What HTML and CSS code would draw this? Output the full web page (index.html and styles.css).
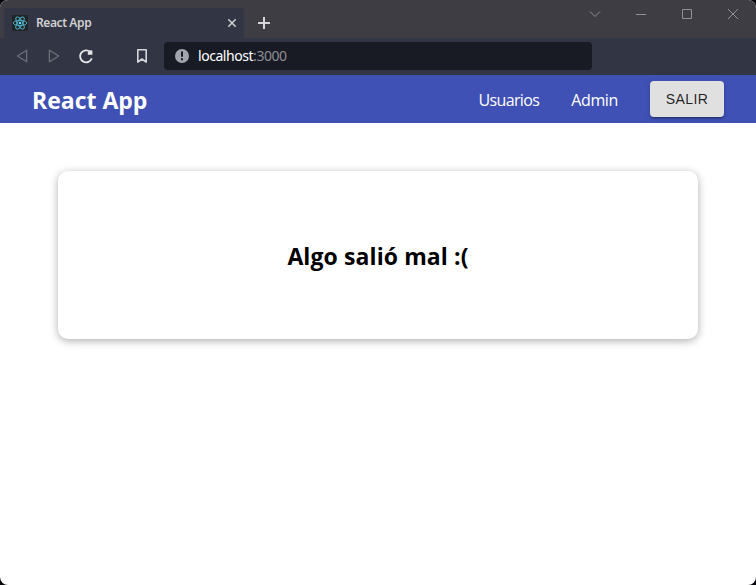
FILE: index.html
```html
<!DOCTYPE html>
<html lang="es">
<head>
<meta charset="utf-8">
<title>React App</title>
<link rel="stylesheet" href="styles.css">
</head>
<body>
<div class="window">
  <div class="titlebar">
    <div class="tab">
      <svg class="favicon" width="16" height="16" viewBox="0 0 16 16" fill="none" stroke="#4fb3cb" stroke-width=".9">
        <rect width="16" height="16" rx="1.5" fill="#222526" stroke="none"/>
        <ellipse cx="8" cy="8" rx="6.8" ry="2.6"/>
        <ellipse cx="8" cy="8" rx="6.8" ry="2.6" transform="rotate(60 8 8)"/>
        <ellipse cx="8" cy="8" rx="6.8" ry="2.6" transform="rotate(120 8 8)"/>
        <circle cx="8" cy="8" r="1.3" fill="#61dafb" stroke="none"/>
      </svg>
      <span class="tab-title">React App</span>
      <svg width="8" height="8" viewBox="0 0 8 8" stroke="#d0d0d3" stroke-width="1.5"><path d="M.3.3l7.4 7.4M7.7.3L.3 7.7"/></svg>
    </div>
    <svg class="new-tab" width="12" height="12" viewBox="0 0 12 12" stroke="#d6d6d8" stroke-width="2"><path d="M6 0v12M0 6h12"/></svg>
    <div class="controls">
      <svg width="12" height="12" viewBox="0 0 12 12"><path d="M1 3.5l5 5 5-5"/></svg>
      <svg width="12" height="12" viewBox="0 0 12 12"><path d="M1 6.5h10"/></svg>
      <svg width="12" height="12" viewBox="0 0 12 12"><path d="M1.5 1.5h9v9h-9z"/></svg>
      <svg width="12" height="12" viewBox="0 0 12 12"><path d="M1 1l10 10M11 1L1 11"/></svg>
    </div>
  </div>
  <div class="toolbar">
    <svg class="icon dim" width="16" height="16" viewBox="0 0 16 16"><path d="M12.6 2.2v11.6L3.4 8z"/></svg>
    <svg class="icon dim" width="16" height="16" viewBox="0 0 16 16"><path d="M3.4 2.2v11.6L12.8 8z"/></svg>
    <svg class="icon reload" width="16" height="16" viewBox="0 0 16 16"><path d="M13.8 10.2A6 6 0 1 1 12.2 3.9"/><path class="solid" d="M14.4 2.4v4.4H9.8V4.6l2.4-2.4z"/></svg>
    <svg class="icon bookmark" width="16" height="16" viewBox="0 0 16 16"><path d="M3.8 1.8h8.4v12.3L8 11l-4.2 3.1z"/></svg>
    <div class="address">
      <svg width="14" height="14" viewBox="0 0 14 14"><circle cx="7" cy="7" r="7" fill="#a1a4ad"/><path d="M7 2.5v5.2M7 9.3v2" stroke="#181b24" stroke-width="2"/></svg>
      <span class="url">localhost<span class="port">:3000</span></span>
    </div>
  </div>
  <header class="navbar">
    <h1 class="brand">React App</h1>
    <nav class="links">
      <a class="link users">Usuarios</a>
      <a class="link admin">Admin</a>
      <button class="logout">SALIR</button>
    </nav>
  </header>
  <main class="content">
    <section class="card"><h2 class="message">Algo salió mal :(</h2></section>
  </main>
</div>
</body>
</html>
```
FILE: styles.css
```css
* { box-sizing: border-box; }
body { margin: 0; background: #08080c; font-family: "Open Sans", "Noto Sans", sans-serif; }
.window { height: 585px; overflow: hidden; border-radius: 8px; background: #fff; display: flex; flex-direction: column; }
svg { display: block; flex: none; }
.titlebar { height: 38px; flex: none; background: #3e3d44; display: flex; align-items: flex-start; padding-left: 4px; }
.tab { width: 240px; height: 30px; margin-top: 8px; padding: 0 8px; background: #323543; border-radius: 4px 4px 0 0; display: flex; align-items: center; }
.tab-title { margin-left: 8px; flex: 1; color: #d0d0d3; font: 600 12px/16px "Noto Sans", sans-serif; letter-spacing: -.4px; }
.new-tab { margin: 17px 0 0 14px; }
.controls { margin: 8px 17px 0 auto; display: flex; gap: 34px; fill: none; stroke: #929197; stroke-width: 1; }
.toolbar { height: 37px; flex: none; background: #323543; display: flex; align-items: center; padding: 0 0 2px 14px; }
.icon { fill: none; stroke: #d6d7db; stroke-width: 1.6; stroke-linejoin: round; margin: 1px 16px 0 0; }
.dim { stroke: #6d707a; stroke-width: 1.3; }
.reload { margin-right: 40px; stroke: #e6e6e8; stroke-width: 1.8; }
.solid { fill: #e6e6e8; stroke: none; }
.bookmark { margin-right: 14px; }
.address { width: 428px; height: 28px; margin-top: 1px; padding-left: 11px; border-radius: 4px; background: #181b24; display: flex; align-items: center; }
.url { margin-left: 9px; color: #fff; font: 14px/20px "Noto Sans", sans-serif; letter-spacing: -.45px; }
.port { color: #8c8d92; }
.navbar { height: 48px; flex: none; padding: 0 32px; background: #3f51b5; color: #fff; display: flex; justify-content: space-between; align-items: center; }
.brand { margin: 2px 0 0; font-size: 23px; line-height: 32px; font-weight: 700; }
.links { display: flex; align-items: center; }
.link { font-size: 16px; line-height: 24px; margin: 2px 32px 0 0; white-space: nowrap; }
.users { letter-spacing: -.65px; }
.admin { letter-spacing: -.35px; }
.logout { width: 74px; height: 36px; padding: 0; border: 0; border-radius: 4px; background: #e0e0e0; color: rgba(0,0,0,.87); font: 14px/24px "Liberation Sans", sans-serif; letter-spacing: .4px; box-shadow: 0 3px 1px -2px rgba(0,0,0,.2), 0 2px 2px rgba(0,0,0,.14), 0 1px 5px rgba(0,0,0,.12); }
.content { padding: 48px 58px; }
.card { height: 168px; border-radius: 10px; background: #fff; display: flex; align-items: center; justify-content: center; box-shadow: 0 2px 8px rgba(0,0,0,.32); }
.message { margin: 2px 0 0; font-size: 23px; line-height: 32px; font-weight: 700; letter-spacing: .1px; color: #000; white-space: nowrap; }
```
